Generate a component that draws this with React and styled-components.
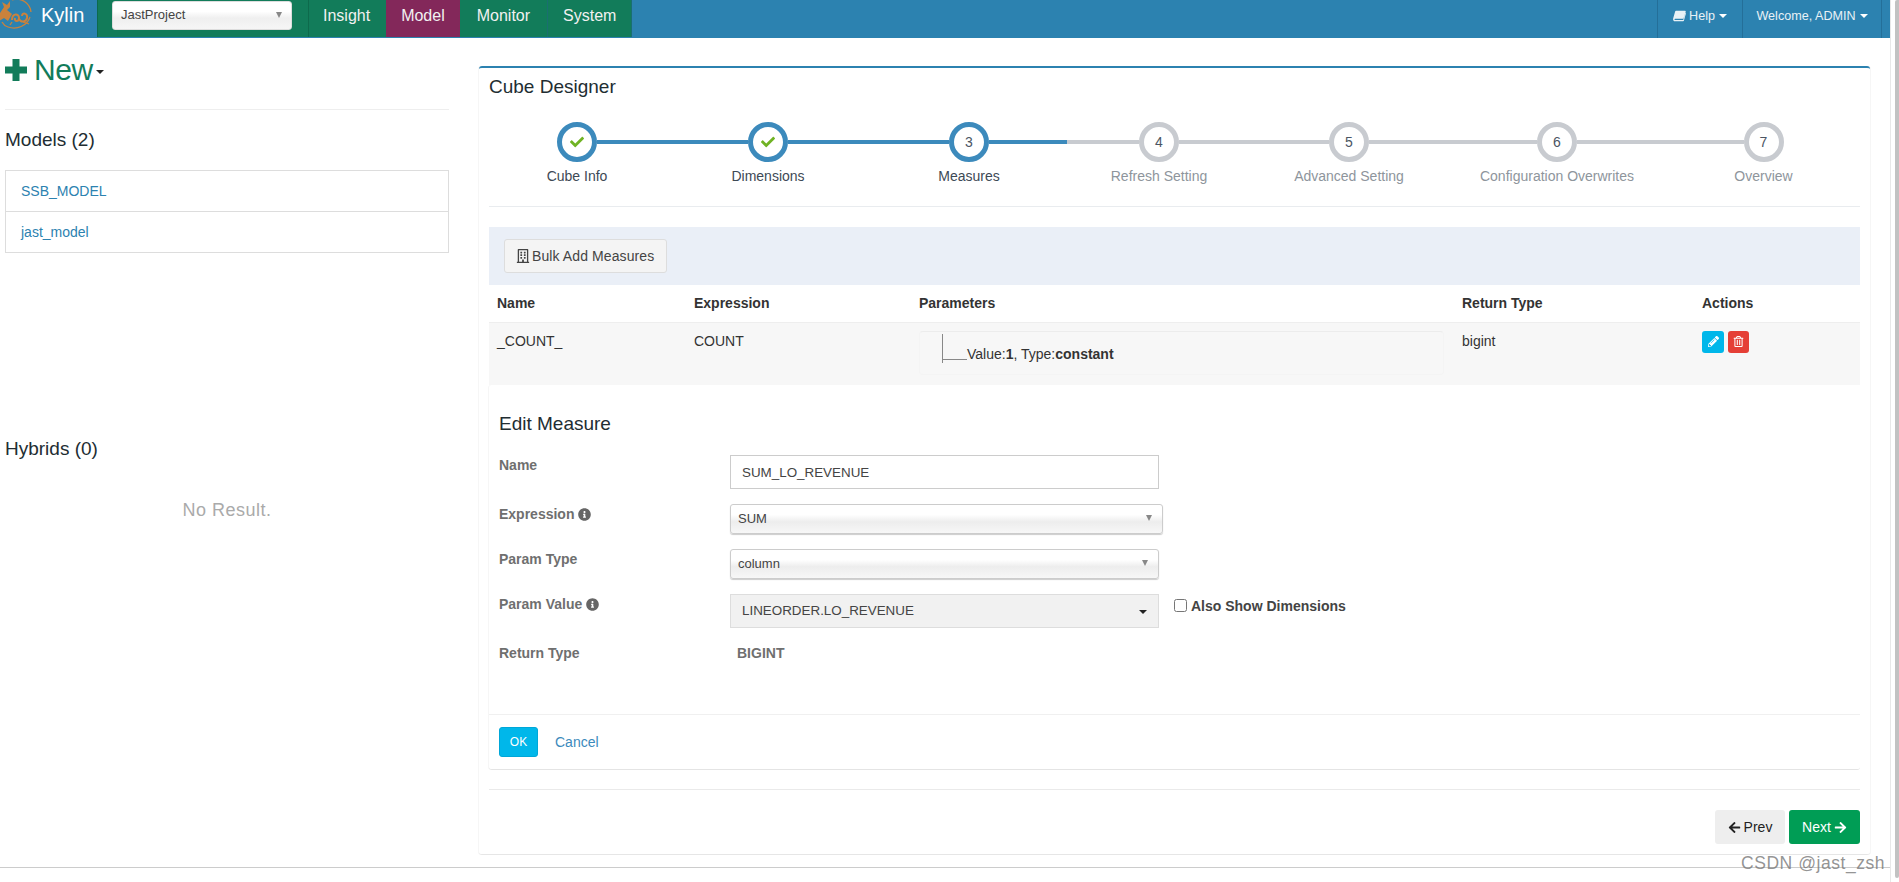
import React from 'react';
import styled, {createGlobalStyle} from 'styled-components';
import {
  FaArrowLeft,
  FaArrowRight,
  FaCheck,
  FaInfoCircle,
  FaPencilAlt,
  FaRegBuilding,
  FaRegTrashAlt,
} from 'react-icons/fa';

const BLUE = '#2c82b0';
const GREEN = '#127c5a';
const STEP_BLUE = '#3c8abc';
const STEP_GREY = '#c8cbd0';

const steps = [
  {label: 'Cube Info', width: 176, done: true, on: true, next: true},
  {label: 'Dimensions', width: 206, done: true, on: true, next: true},
  {label: 'Measures', width: 196, on: true, next: true},
  {label: 'Refresh Setting', width: 184},
  {label: 'Advanced Setting', width: 196},
  {label: 'Configuration Overwrites', width: 220},
  {label: 'Overview', width: 193},
];

const Logo = () => (
  <svg width="34" height="32" viewBox="0 0 34 32" fill="none" stroke="#c9823c" strokeWidth="1.3">
    <path d="M13 1 C22 -2 31 4 32 13" />
    <path d="M31 18 C28 27 18 31 9 28 C6 27 4 25 3 23" />
    <path d="M1 14 L5 8 L3 3 L8 6 L11 2 L11 8 L8 11 L13 15 L9 22 L5 19 L0 22 Z" fill="#c9823c" stroke="none" />
    <path d="M13 21 C13 14 20 14 20 19 C20 23 15 23 16 19" strokeWidth="2" />
    <path d="M20 20 C22 24 27 23 28 19 C29 14 23 13 23 17" strokeWidth="2" />
    <path d="M13 23 L11 26 M24 23 L30 25" />
  </svg>
);

const BookIcon = () => (
  <svg width="13" height="12" viewBox="0 0 14 12" fill="currentColor">
    <path d="M3.2 .4 H13 C13.6 .4 13.8 .9 13.7 1.3 L11.4 8.4 C11.2 8.9 10.9 9 10.4 9 H2.4 C1.2 9 1.1 10.1 2.2 10.2 H11 L13.4 2.6 L14 3.1 L11.7 11.2 C11.6 11.5 11.3 11.7 11 11.7 H2.2 C.4 11.7 -.3 10 .3 8.2 L2.3 1.2 C2.5 .7 2.8 .4 3.2 .4 Z" />
  </svg>
);

const PlusIcon = () => (
  <svg width="22" height="22" viewBox="0 0 22 22" fill="none" stroke="currentColor" strokeWidth="7">
    <path d="M11 0 V22 M0 11 H22" />
  </svg>
);

const Step = ({index, step}) => (
  <StepColumn $width={step.width}>
    <StepTrack>
      <Segment $color={index === 0 ? 'transparent' : step.on ? STEP_BLUE : STEP_GREY} />
      <Circle $on={step.on}>{step.done ? <FaCheck /> : index + 1}</Circle>
      <Segment $color={index === steps.length - 1 ? 'transparent' : step.next ? STEP_BLUE : STEP_GREY} />
    </StepTrack>
    <StepLabel $on={step.on}>{step.label}</StepLabel>
  </StepColumn>
);

const App = () => (
  <Page>
    <GlobalStyle />
    <Main>
      <Navbar>
        <Brand>
          <Logo />
          <BrandName>Kylin</BrandName>
        </Brand>
        <NavGreen>
          <ProjectSelect>
            JastProject
            <SmallArrow />
          </ProjectSelect>
          <NavTabs>
            <NavTab $left={14} $right={15} $first>Insight</NavTab>
            <NavTab $left={15} $right={15} $active>Model</NavTab>
            <NavTab $left={17} $right={18} $edge>Monitor</NavTab>
            <NavTab $left={15} $right={16} $edge>System</NavTab>
          </NavTabs>
        </NavGreen>
        <NavRight>
          <NavMenu $width={85}>
            <BookIcon />
            Help
            <NavCaret />
          </NavMenu>
          <NavMenu $width={140}>
            Welcome, ADMIN
            <NavCaret />
          </NavMenu>
        </NavRight>
      </Navbar>

      <Content>
        <Sidebar>
          <NewButton>
            <PlusIcon />
            New
            <NewCaret />
          </NewButton>
          <SideRule />
          <SideHeading>Models (2)</SideHeading>
          <ModelList>
            <ModelItem>SSB_MODEL</ModelItem>
            <ModelItem>jast_model</ModelItem>
          </ModelList>
          <HybridHeading>Hybrids (0)</HybridHeading>
          <NoResult>No Result.</NoResult>
        </Sidebar>

        <Panel>
          <PanelTitle>Cube Designer</PanelTitle>
          <Stepper>
            {steps.map((step, i) => <Step key={step.label} index={i} step={step} />)}
          </Stepper>
          <Rule />
          <Toolbar>
            <BulkButton>
              <FaRegBuilding />
              Bulk Add Measures
            </BulkButton>
          </Toolbar>
          <MeasureTable>
            <colgroup>
              <col width="197" />
              <col width="225" />
              <col width="543" />
              <col width="240" />
              <col width="166" />
            </colgroup>
            <thead>
              <tr>
                <HeadCell>Name</HeadCell>
                <HeadCell>Expression</HeadCell>
                <HeadCell>Parameters</HeadCell>
                <HeadCell>Return Type</HeadCell>
                <HeadCell>Actions</HeadCell>
              </tr>
            </thead>
            <tbody>
              <tr>
                <BodyCell>_COUNT_</BodyCell>
                <BodyCell>COUNT</BodyCell>
                <BodyCell>
                  <ParamBox>
                    <TreeNode>
                      <TreeElbow />
                      <TreeLabel>Value:<b>1</b>, Type:<b>constant</b></TreeLabel>
                    </TreeNode>
                  </ParamBox>
                </BodyCell>
                <BodyCell>bigint</BodyCell>
                <BodyCell>
                  <ActionGroup>
                    <ActionButton $color="#00b7ea" $width={22}><FaPencilAlt /></ActionButton>
                    <ActionButton $color="#e53f36" $width={21}><FaRegTrashAlt /></ActionButton>
                  </ActionGroup>
                </BodyCell>
              </tr>
            </tbody>
          </MeasureTable>

          <EditBox>
            <EditBody>
              <EditTitle>Edit Measure</EditTitle>
              <FormRow $top={19}>
                <FieldLabel>Name</FieldLabel>
                <TextField readOnly value="SUM_LO_REVENUE" />
              </FormRow>
              <FormRow>
                <FieldLabel>Expression <FaInfoCircle /></FieldLabel>
                <GradientSelect $width={433}>
                  SUM
                  <SmallArrow />
                </GradientSelect>
              </FormRow>
              <FormRow>
                <FieldLabel>Param Type</FieldLabel>
                <GradientSelect $width={429}>
                  column
                  <SmallArrow />
                </GradientSelect>
              </FormRow>
              <FormRow>
                <FieldLabel>Param Value <FaInfoCircle /></FieldLabel>
                <ValueSelect>
                  LINEORDER.LO_REVENUE
                  <DarkCaret />
                </ValueSelect>
                <CheckLabel>
                  <CheckInput type="checkbox" readOnly />
                  Also Show Dimensions
                </CheckLabel>
              </FormRow>
              <FormRow>
                <FieldLabel>Return Type</FieldLabel>
                <ReturnValue>BIGINT</ReturnValue>
              </FormRow>
            </EditBody>
            <EditFooter>
              <OkButton>OK</OkButton>
              <CancelLink>Cancel</CancelLink>
            </EditFooter>
          </EditBox>

          <PagerRule />
          <Pager>
            <PagerButton><FaArrowLeft /> Prev</PagerButton>
            <PagerButton $next>Next <FaArrowRight /></PagerButton>
          </Pager>
        </Panel>
      </Content>

      <PageFooter>
        <FooterText>M</FooterText>
      </PageFooter>
    </Main>
    <ScrollTrack>
      <ScrollThumb />
    </ScrollTrack>
    <Watermark>CSDN @jast_zsh</Watermark>
  </Page>
);

const GlobalStyle = createGlobalStyle`
  html, body {
    margin: 0;
    height: 882px;
    overflow: hidden;
    background: #fff;
  }

  body {
    font-family: "Liberation Sans", Arial, sans-serif;
    font-size: 14px;
    line-height: 20px;
    color: #333;
  }

  * {
    box-sizing: border-box;
  }
`;

const Page = styled.div`
  display: flex;
  width: 1899px;
  height: 882px;
  overflow: hidden;
`;

const Main = styled.div`
  width: 1890px;
  flex: none;
`;

const Navbar = styled.header`
  display: flex;
  height: 38px;
  background: ${BLUE};
  color: #fff;
`;

const Brand = styled.div`
  display: flex;
  width: 97px;
  svg {
    flex: none;
    margin: -1px 8px 0 -1px;
  }
`;

const BrandName = styled.span`
  font-size: 20px;
  line-height: 30px;
`;

const NavGreen = styled.div`
  display: flex;
  height: 37px;
  background: ${GREEN};
  border-left: 1px solid #0d6a4c;
  padding-left: 14px;
`;

const ProjectSelect = styled.div`
  display: flex;
  align-items: center;
  justify-content: space-between;
  width: 180px;
  height: 29px;
  margin: 1px 16px 0 0;
  padding: 0 9px 2px 8px;
  border: 1px solid #ddd;
  border-radius: 3px;
  background: linear-gradient(#fff 35%, #efefef 60%, #f6f6f6);
  color: #444;
  font-size: 13px;

  i {
    border-left-width: 3.5px;
    border-right-width: 3.5px;
    border-top-width: 6px;
  }
`;

const SmallArrow = styled.i`
  width: 0;
  height: 0;
  border-left: 4px solid transparent;
  border-right: 4px solid transparent;
  border-top: 7px solid #888;
`;

const NavTabs = styled.nav`
  display: flex;
`;

const NavTab = styled.a`
  padding: 5px ${p => p.$right}px 0 ${p => p.$left}px;
  font-size: 16px;
  line-height: 22px;
  color: #f1f1f1;
  background: ${p => (p.$active ? '#83285a' : 'transparent')};
  border-left: ${p => (p.$first ? '1px solid #0d6a4c' : 'none')};
  margin-left: ${p => (p.$active ? '1px' : '0')};
  box-shadow: ${p => (p.$edge ? 'inset -1px 0 0 #1a6f70' : 'none')};
`;

const NavRight = styled.div`
  display: flex;
  margin-left: auto;
  padding-right: 8px;
`;

const NavMenu = styled.a`
  display: flex;
  align-items: center;
  justify-content: center;
  gap: 3px;
  width: ${p => p.$width}px;
  height: 38px;
  padding-bottom: 7px;
  border-left: 1px solid #246f99;
  font-size: 12.6px;
  color: #e8f1f6;
  &:last-child {
    border-right: 1px solid #246f99;
  }
`;

const NavCaret = styled.i`
  width: 0;
  height: 0;
  margin-left: 1px;
  border-left: 4px solid transparent;
  border-right: 4px solid transparent;
  border-top: 4px solid #fff;
`;

const Content = styled.div`
  display: flex;
  align-items: flex-start;
`;

const Sidebar = styled.aside`
  width: 444px;
  margin-left: 5px;
`;

const NewButton = styled.div`
  display: flex;
  align-items: center;
  margin-top: 15px;
  height: 34px;
  font-size: 30px;
  line-height: 34px;
  letter-spacing: -0.4px;
  color: ${GREEN};
  svg {
    margin-right: 7px;
  }
`;

const NewCaret = styled.i`
  width: 0;
  height: 0;
  margin: 3px 0 0 3px;
  border-left: 4px solid transparent;
  border-right: 4px solid transparent;
  border-top: 4px solid #222;
`;

const SideRule = styled.div`
  height: 1px;
  margin-top: 22px;
  background: #eee;
`;

const SideHeading = styled.h3`
  margin: 20px 0 0;
  font-size: 19px;
  font-weight: 400;
  line-height: 20px;
  color: #222d32;
`;

const ModelList = styled.div`
  margin-top: 20px;
  border: 1px solid #ddd;
`;

const ModelItem = styled.a`
  display: block;
  height: 40px;
  padding: 10px 15px;
  color: ${BLUE};
  &:first-child {
    height: 41px;
    border-bottom: 1px solid #ddd;
  }
`;

const HybridHeading = styled(SideHeading)`
  margin-top: 186px;
`;

const NoResult = styled.div`
  margin-top: 39px;
  font-size: 18px;
  line-height: 24px;
  text-align: center;
  letter-spacing: 0.5px;
  color: #aaa;
`;

const Panel = styled.section`
  width: 1391px;
  margin: 28px 0 0 30px;
  padding: 0 10px 10px;
  border-top: 2px solid ${BLUE};
  border-bottom: 1px solid #e6e6e6;
  border-radius: 3px;
  box-shadow: 1px 0 0 #f6f6f6, -1px 0 0 #f6f6f6;
`;

const PanelTitle = styled.h3`
  margin: 7px 0 0;
  font-size: 19px;
  font-weight: 400;
  line-height: 24px;
  color: #222d32;
`;

const Stepper = styled.div`
  display: flex;
  margin-top: 23px;
`;

const StepColumn = styled.div`
  flex: none;
  width: ${p => p.$width}px;
  text-align: center;
`;

const StepTrack = styled.div`
  display: flex;
  align-items: center;
  height: 40px;
`;

const Segment = styled.div`
  flex: 1;
  height: 4px;
  background: ${p => p.$color};
`;

const Circle = styled.div`
  display: flex;
  flex: none;
  align-items: center;
  justify-content: center;
  width: 40px;
  height: 40px;
  border: 5px solid ${p => (p.$on ? STEP_BLUE : STEP_GREY)};
  border-radius: 50%;
  background: #fff;
  color: #4b5563;
  svg {
    width: 14px;
    height: 14px;
    color: #70b324;
  }
`;

const StepLabel = styled.div`
  margin-top: 4px;
  font-size: 14px;
  line-height: 20px;
  white-space: nowrap;
  color: ${p => (p.$on ? '#3d4955' : '#8e959c')};
`;

const Rule = styled.div`
  height: 1px;
  margin-top: 20px;
  background: #e9ecef;
`;

const Toolbar = styled.div`
  height: 58px;
  margin-top: 20px;
  padding: 12px 15px;
  background: #eaeff7;
`;

const BulkButton = styled.button`
  display: flex;
  align-items: center;
  gap: 2px;
  height: 34px;
  width: 163px;
  padding: 0 0 0 11px;
  border: 1px solid #ddd;
  border-radius: 3px;
  background: #f4f4f4;
  font-family: inherit;
  font-size: 14px;
  letter-spacing: 0.1px;
  color: #444;
  white-space: nowrap;
`;

const MeasureTable = styled.table`
  width: 1371px;
  table-layout: fixed;
  border-collapse: collapse;
`;

const HeadCell = styled.th`
  height: 37px;
  padding: 0 8px;
  border-bottom: 1px solid #eee;
  font-weight: 700;
  text-align: left;
`;

const BodyCell = styled.td`
  height: 63px;
  padding: 8px 8px 0;
  vertical-align: top;
  background: #f7f7f7;
`;

const ParamBox = styled.div`
  width: 525px;
  height: 44px;
  border: 1px solid #f4f4f4;
  border-top-color: #ececec;
  border-radius: 4px;
  padding: 2px 0 0 22px;
`;

const TreeNode = styled.div`
  display: flex;
  height: 29px;
  border-left: 1px solid #888;
`;

const TreeElbow = styled.div`
  width: 24px;
  height: 26px;
  border-bottom: 1px solid #888;
`;

const TreeLabel = styled.div`
  margin-top: 10px;
  color: #333;
`;

const ActionGroup = styled.div`
  display: flex;
  gap: 4px;
`;

const ActionButton = styled.button`
  display: flex;
  align-items: center;
  justify-content: center;
  width: ${p => p.$width}px;
  height: 22px;
  padding: 0;
  border: none;
  border-radius: 3px;
  background: ${p => p.$color};
  color: #fff;
  svg {
    width: 11px;
    height: 11px;
  }
`;

const EditBox = styled.div`
  border-bottom: 1px solid #e4e4e4;
  border-radius: 3px;
  box-shadow: -1px 0 0 #f6f6f6;
`;

const EditBody = styled.div`
  padding: 27px 10px 51px;
  border-bottom: 1px solid #f0f0f0;
`;

const EditTitle = styled.h4`
  margin: 0;
  font-size: 19px;
  font-weight: 400;
  line-height: 24px;
  color: #222d32;
`;

const FormRow = styled.div`
  display: flex;
  margin-top: ${p => p.$top || 15}px;
`;

const FieldLabel = styled.label`
  flex: none;
  width: 231px;
  font-weight: 700;
  color: #6f6f6f;
  font-size: 14px;
  svg {
    width: 13px;
    height: 13px;
    vertical-align: -2px;
    color: #666;
  }
`;

const TextField = styled.input`
  width: 429px;
  height: 34px;
  padding: 0 11px;
  border: 1px solid #ccc;
  font-family: inherit;
  font-size: 13.4px;
  color: #444;
  outline: none;
`;

const GradientSelect = styled.div`
  display: flex;
  align-items: center;
  justify-content: space-between;
  width: ${p => p.$width}px;
  height: 30px;
  padding: 0 10px 0 7px;
  border: 1px solid #ccc;
  border-radius: 3px;
  background: linear-gradient(#fff 35%, #ededed 60%, #f7f7f7);
  box-shadow: 0 1px 1px #ccc;
  font-size: 13px;
  color: #444;
  i {
    border-left-width: 3.5px;
    border-right-width: 3.5px;
    border-top-width: 6px;
    margin-bottom: 2px;
  }
`;

const ValueSelect = styled.div`
  display: flex;
  align-items: center;
  justify-content: space-between;
  width: 429px;
  height: 34px;
  padding: 0 11px;
  border: 1px solid #ddd;
  background: #f1f1f1;
  font-size: 13.4px;
  color: #444;
`;

const DarkCaret = styled.i`
  width: 0;
  height: 0;
  margin-top: 2px;
  border-left: 4px solid transparent;
  border-right: 4px solid transparent;
  border-top: 4px solid #222;
`;

const CheckLabel = styled.label`
  display: flex;
  align-items: flex-start;
  margin-left: 15px;
  height: 20px;
  font-size: 14px;
  font-weight: 700;
  line-height: 24px;
  color: #444;
`;

const CheckInput = styled.input`
  width: 13px;
  height: 13px;
  margin: 5px 4px 0 0;
`;

const ReturnValue = styled.div`
  margin-left: 7px;
  font-weight: 700;
  color: #6f6f6f;
`;

const EditFooter = styled.div`
  display: flex;
  align-items: center;
  padding: 12px 10px;
`;

const OkButton = styled.button`
  width: 39px;
  height: 30px;
  padding: 0;
  border: 1px solid #00a7d8;
  border-radius: 3px;
  background: #00b7ea;
  font-family: inherit;
  font-size: 12px;
  color: #fff;
`;

const CancelLink = styled.a`
  margin-left: 17px;
  color: ${STEP_BLUE};
`;

const PagerRule = styled.div`
  height: 1px;
  margin-top: 19px;
  background: #eaeaea;
`;

const Pager = styled.div`
  display: flex;
  justify-content: flex-end;
  gap: 4px;
  margin-top: 20px;
`;

const PagerButton = styled.button`
  display: flex;
  align-items: center;
  justify-content: center;
  gap: 3px;
  width: ${p => (p.$next ? 71 : 70)}px;
  height: 34px;
  padding: 0;
  border: none;
  border-radius: 3px;
  background: ${p => (p.$next ? '#009d55' : '#eee')};
  font-family: inherit;
  font-size: 14px;
  color: ${p => (p.$next ? '#fff' : '#222')};
  svg {
    width: 13px;
    height: 13px;
  }
`;

const PageFooter = styled.footer`
  height: 15px;
  margin-top: 12px;
  border-top: 1px solid #ccc;
  padding: 11px 0 0 904px;
`;

const FooterText = styled.div`
  font-size: 18px;
  line-height: 20px;
  color: #888;
`;

const ScrollTrack = styled.div`
  flex: none;
  width: 9px;
  height: 882px;
  padding: 0 0 4px 4px;
  border-left: 1px solid #e8e8e8;
`;

const ScrollThumb = styled.div`
  height: 100%;
  border-radius: 3px 0 3px 3px;
  background: #c2c2c2;
`;

const Watermark = styled.div`
  position: absolute;
  left: 1741px;
  top: 852px;
  font-size: 17.5px;
  line-height: 22px;
  letter-spacing: 0.55px;
  white-space: nowrap;
  color: rgba(120, 120, 120, 0.8);
`;

export default App;
